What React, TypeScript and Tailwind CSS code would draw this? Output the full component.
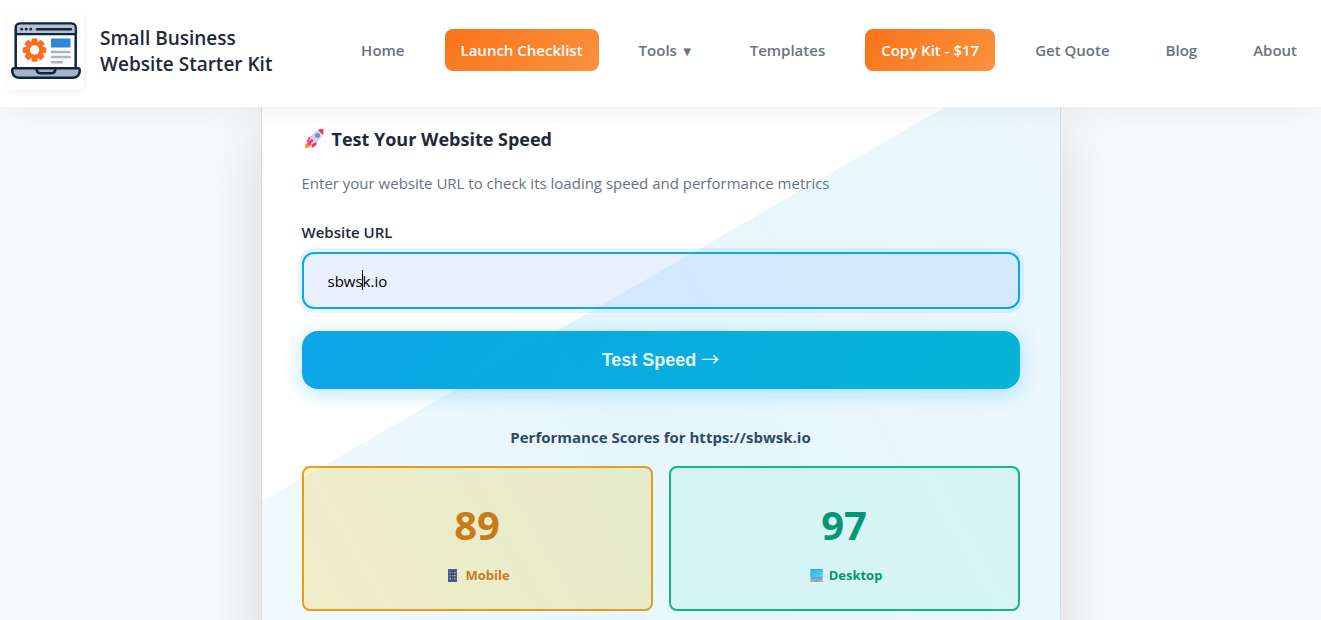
const Logo = () => {
  return (
    <svg viewBox="0 0 76 80" className="h-20 w-[76px] shrink-0 rounded bg-[#fffdfb] shadow-[0_2px_8px_rgba(0,0,0,0.06)]" aria-hidden="true">
      <rect x="7.700" y="13.500" width="60" height="47" rx="4" fill="#fdfdfd" stroke="#0b2545" strokeWidth="2.500" />
      <path d="M9 23V18q0-3.200 3.200-3.200h51q3.200 0 3.200 3.200v5z" fill="#b9c1cb" />
      <path d="M7.700 24.200h60" stroke="#0b2545" strokeWidth="2.200" />
      <circle cx="13.700" cy="19.200" r="1.400" fill="#0b2545" />
      <circle cx="18.200" cy="19.200" r="1.400" fill="#0b2545" />
      <circle cx="22.700" cy="19.200" r="1.400" fill="#0b2545" />
      <path d="M29 19.200h34" stroke="#0b2545" strokeWidth="2.400" strokeLinecap="round" />
      <g fill="#ff6b22" transform="translate(26.500 40)">
        <rect x="-3" y="-11.800" width="6" height="23.600" rx="1.500" />
        <rect x="-3" y="-11.800" width="6" height="23.600" rx="1.500" transform="rotate(45)" />
        <rect x="-3" y="-11.800" width="6" height="23.600" rx="1.500" transform="rotate(90)" />
        <rect x="-3" y="-11.800" width="6" height="23.600" rx="1.500" transform="rotate(135)" />
        <circle r="9" />
        <circle r="4.700" fill="#fdfdfd" />
      </g>
      <rect x="43" y="28.500" width="19.500" height="9" rx="0.500" fill="#2b87d1" />
      <path d="M44 42h17.500M44 47h17.500M44 52.300h10" stroke="#adb4bb" strokeWidth="2.500" strokeLinecap="round" />
      <path d="M5.500 58.300h65q1.500 0 1.200 3.500-1 6-7 6H11.300q-6 0-7-6-.300-3.500 1.200-3.500z" fill="#a9b4c2" stroke="#0b2545" strokeWidth="2.500" />
      <path d="M28.500 58.300h19q0 5-4 5h-11q-4 0-4-5z" fill="#a9b4c2" stroke="#0b2545" strokeWidth="2.500" />
    </svg>
  );
};

const Rocket = () => {
  return (
    <svg viewBox="0 0 20 20" className="ml-[2px] h-5 w-5" aria-hidden="true">
      <path d="M5 12L1 16v3h3l4-3z" fill="#ff9a3c" />
      <path d="M8 7L4.500 8.500 2.500 13l3.500-.500zM13 12l-1 4.500L8 19l-.500-4z" fill="#f0357f" />
      <path d="M5 12q2-7 9-11l5 .500.500 4q-4 7-11 9.500z" fill="#d9d3e4" />
      <path d="M14 1q3-1.300 5.200-.700.800 2.500-.500 5.500z" fill="#f4384f" />
      <circle cx="13.500" cy="6.500" r="2.300" fill="#4a6fa8" />
      <circle cx="13.500" cy="6.500" r="1.400" fill="#55b4f5" />
      <path d="M4.500 15l3.500-3.500" stroke="#f0357f" strokeWidth="2.500" strokeLinecap="round" />
    </svg>
  );
};

const MobileIcon = () => {
  return (
    <svg viewBox="0 0 9 13" className="h-[13px] w-[9px]" aria-hidden="true">
      <rect width="9" height="13" rx="0.500" fill="#5a4f9e" />
      <rect x="1" y="2" width="7" height="9" fill="#2f2a63" />
      <path d="M1.200 2.700h1.800v1.800H1.200zM3.600 5.700h1.800v1.800H3.600zM6 8.700h1.800v1.800H6z" fill="#f0885a" />
      <path d="M3.600 2.700h1.800v1.800H3.600zM1.200 5.700h1.800v1.800H1.200zM3.600 8.700h1.800v1.800H3.600z" fill="#49a6ee" />
      <path d="M6 2.700h1.800v1.800H6zM6 5.700h1.800v1.800H6zM1.200 8.700h1.800v1.800H1.200z" fill="#e9a06a" />
    </svg>
  );
};

const DesktopIcon = () => {
  return (
    <svg viewBox="0 0 13 13" className="h-[13px] w-[13px]" aria-hidden="true">
      <defs>
        <linearGradient id="screen" x1="0" y1="0" x2="1" y2="1">
          <stop offset="0" stopColor="#2cb0f6" />
          <stop offset="1" stopColor="#4fe0fb" />
        </linearGradient>
      </defs>
      <rect x="0.500" width="12" height="9" fill="#3a87bd" />
      <rect x="1" y="0.500" width="11" height="7.500" fill="url(#screen)" />
      <path d="M.500 8.500h12l.500 4.500H0z" fill="#b4b2c8" />
      <path d="M1.500 9.800h10M4.500 11.800h4" stroke="#85829c" strokeWidth="0.800" />
    </svg>
  );
};

const linkClass = "px-4 py-2 text-[15px] font-semibold text-gray-500";
const ctaClass =
  "rounded-lg bg-linear-135 from-[#f97316] to-[#fb923c] px-4 py-[9px] text-[15px] font-semibold text-white";

const App = () => {
  return (
    <div className="flex min-h-screen flex-col overflow-hidden bg-[#f9fafb] font-['Open_Sans','Noto_Sans',sans-serif] text-gray-800">
      <header className="relative z-10 flex h-[107px] items-center justify-between bg-white px-2 pb-[7px] shadow-[0_4px_30px_rgba(0,0,0,0.06)]">
        <a href="#" className="flex shrink-0 items-center gap-4 text-[19px] leading-[26px] font-semibold">
          <Logo />
          <span className="pt-[2px]">
            Small Business
            <br />
            Website Starter Kit
          </span>
        </a>
        <nav className="flex items-center gap-6 leading-6 whitespace-nowrap">
          <a href="#" className={linkClass}>Home</a>
          <a href="#" className={ctaClass}>Launch Checklist</a>
          <a href="#" className={linkClass}>
            Tools <span className="text-[13px] leading-none">▼</span>
          </a>
          <a href="#" className={linkClass}>Templates</a>
          <a href="#" className={ctaClass}>Copy Kit - $17</a>
          <a href="#" className={linkClass}>Get Quote</a>
          <a href="#" className={linkClass}>Blog</a>
          <a href="#" className={linkClass}>About</a>
        </nav>
      </header>

      <main className="relative mx-auto w-full max-w-[800px] flex-1 border-x border-[#dcdddf] bg-white px-10 pt-[18px] pb-10 shadow-[0_20px_60px_rgba(0,0,0,0.15)]">
        <h2 className="flex items-center gap-2 text-[18px] leading-7 font-bold">
          <Rocket />
          Test Your Website Speed
        </h2>
        <p className="mt-[18px] text-[15px] leading-6 text-gray-500">
          Enter your website URL to check its loading speed and performance metrics
        </p>

        <form onSubmit={(e) => e.preventDefault()}>
          <label htmlFor="url" className="mt-[25px] block text-[15px] leading-6 font-semibold">
            Website URL
          </label>
          <div className="relative mt-2">
            <input
              id="url"
              type="text"
              defaultValue="sbwsk.io"
              className="block h-[57px] w-full rounded-xl border-2 border-[#0ea5e9] bg-[#e8f0fe] px-6 text-[15px] text-black ring-4 ring-[#0ea5e9]/10 outline-none"
            />
            <span className="absolute top-[18px] left-[60px] h-5 w-px bg-black" />
          </div>
          <button
            type="submit"
            className="mt-[22px] block h-[58px] w-full rounded-2xl bg-linear-135 from-[#0ea5e9] to-[#06b6d4] font-['Liberation_Sans',sans-serif] text-[18px] font-bold text-white shadow-[0_4px_20px_rgba(14,165,233,0.3)]"
          >
            Test Speed <span className="font-['Noto_Sans_CJK_SC',sans-serif] leading-none font-normal">→</span>
          </button>
        </form>

        <h3 className="mt-9 text-center text-[15px] leading-6 font-bold text-[#334155]">
          Performance Scores for https://sbwsk.io
        </h3>
        <div className="mt-[17px] grid grid-cols-2 gap-4">
          <div className="flex h-[145px] flex-col items-center rounded-lg border-2 border-[#f59e0b] bg-[#fef3c7] pt-[31px] text-[#d97706]">
            <span className="text-[40px] leading-[52px] font-bold">89</span>
            <span className="mt-[14px] flex items-center gap-2 pl-1 text-[13px] leading-5 font-bold">
              <MobileIcon />
              Mobile
            </span>
          </div>
          <div className="flex h-[145px] flex-col items-center rounded-lg border-2 border-[#10b981] bg-[#ecfdf5] pt-[31px] text-[#059669]">
            <span className="text-[40px] leading-[52px] font-bold">97</span>
            <span className="mt-[14px] flex items-center gap-[6px] pl-1 text-[13px] leading-5 font-bold">
              <DesktopIcon />
              Desktop
            </span>
          </div>
        </div>

        {/* tinted wedge over the whole card */}
        <div className="pointer-events-none absolute inset-0 bg-[linear-gradient(60deg,rgba(14,165,233,0.06),rgba(14,165,233,0.1)_45%,rgba(14,165,233,0.08))] mask-[linear-gradient(150deg,transparent_341px,black_342px)]" />
      </main>
    </div>
  );
};

export default App;
